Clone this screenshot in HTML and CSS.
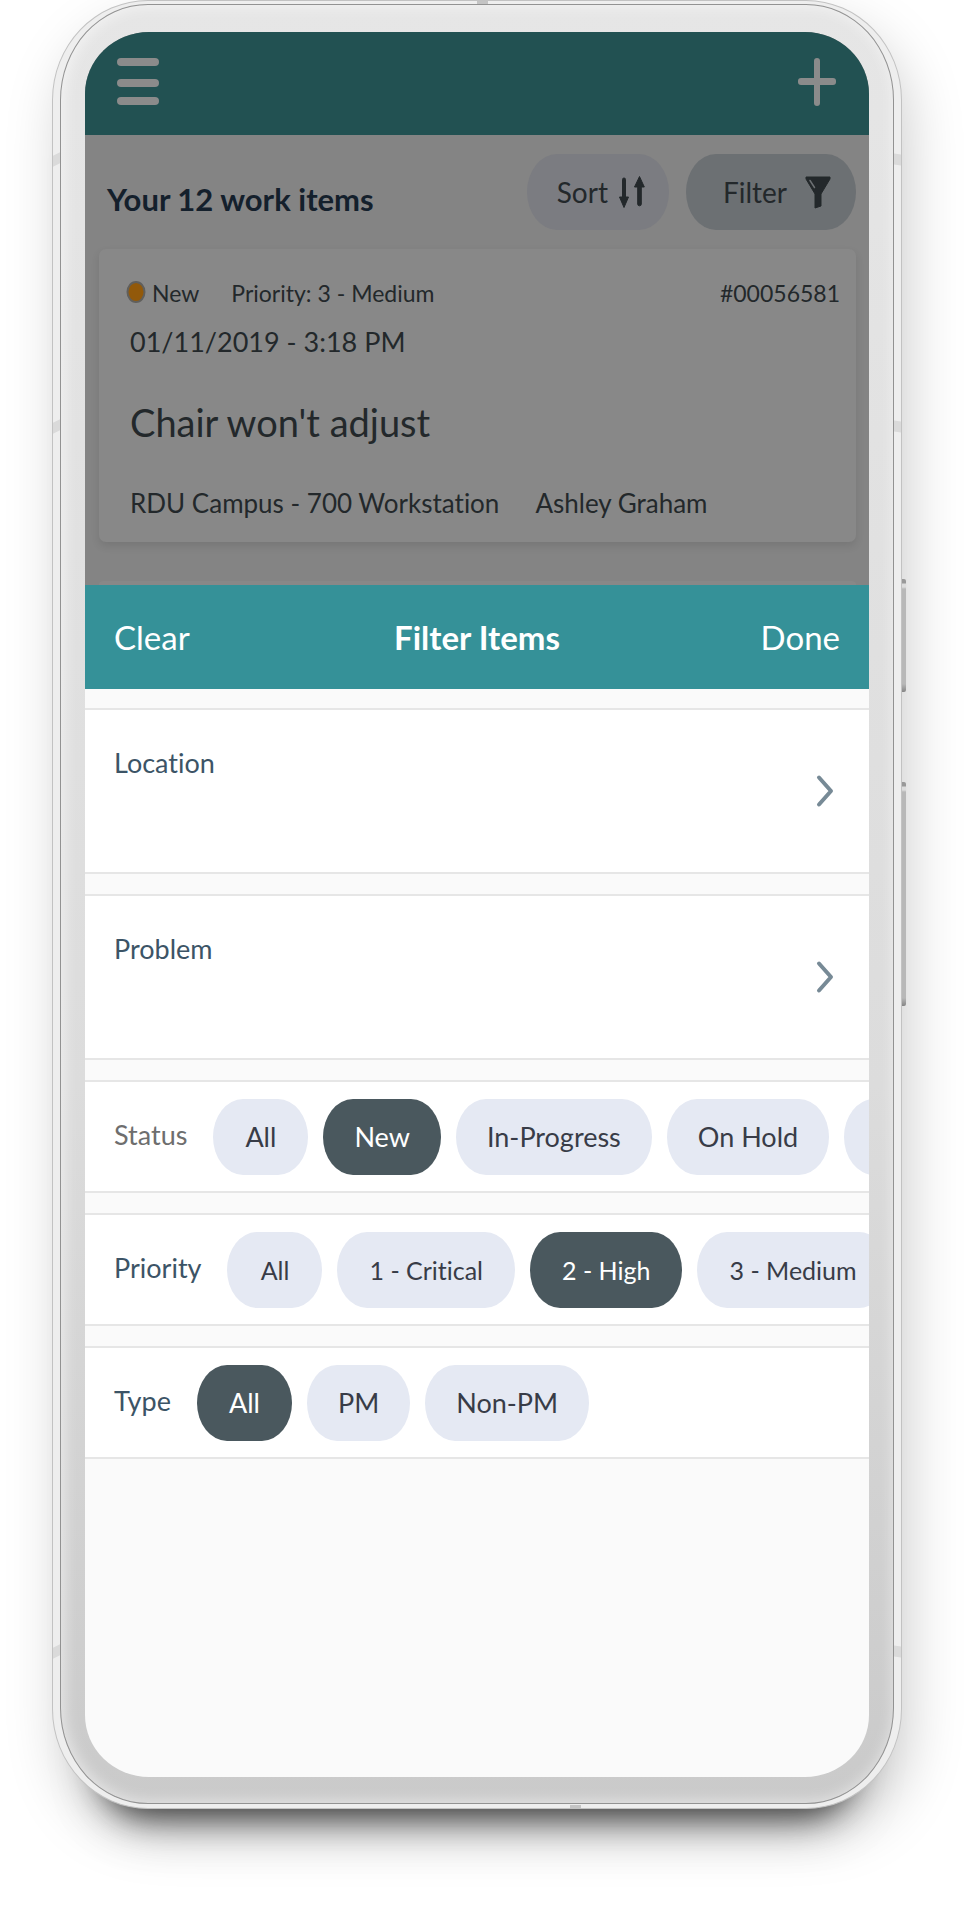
FILE: index.html
```html
<!DOCTYPE html>
<html lang="en">
<head>
<meta charset="utf-8">
<meta name="viewport" content="width=device-width, initial-scale=1">
<title>Filter Items</title>
<link rel="stylesheet" href="styles.css">
</head>
<body>
<div class="phone">
  <span class="seam seam-left seam-high"></span>
  <span class="seam seam-left seam-mid"></span>
  <span class="seam seam-left seam-low"></span>
  <span class="seam seam-right seam-high"></span>
  <span class="seam seam-right seam-mid"></span>
  <span class="seam seam-right seam-low"></span>
  <span class="seam-flat seam-top"></span>
  <span class="seam-flat seam-bottom"></span>
  <span class="key key-power"></span>
  <span class="key key-volume"></span>
  <div class="bezel">
    <div class="screen">
      <div class="app">
        <header class="app-bar">
          <button class="icon-button" type="button" aria-label="Menu">
            <svg width="42" height="48" viewBox="0 0 42 48"><g fill="#8b8b8b"><rect width="42" height="8" y="0" rx="4"/><rect width="42" height="8" y="21" rx="4"/><rect width="42" height="8" y="39" rx="4"/></g></svg>
          </button>
          <button class="icon-button" type="button" aria-label="Add">
            <svg width="40" height="48" viewBox="0 0 40 48"><g fill="#8b8b8b"><rect x="1" y="20" width="38" height="7" rx="3"/><rect x="17" y="0" width="6" height="48" rx="3"/></g></svg>
          </button>
        </header>
        <div class="toolbar">
          <h1 class="heading">Your 12 work items</h1>
          <button class="tool tool-sort" type="button">Sort
            <svg width="26" height="32" viewBox="0 0 26 32"><g fill="#23282b" stroke="#23282b" stroke-width="1" stroke-linejoin="round"><path d="M3.500 3.500a1.500 1.500 0 0 1 3 0V21h3L5 31.500.5 21h3z"/><path d="M18.700 28a1.800 1.800 0 0 0 3.600 0V11h3L20.500.5 15.500 11h3.200z"/></g></svg>
          </button>
          <button class="tool tool-filter" type="button">Filter
            <svg width="26" height="33" viewBox="0 0 26 33"><path d="M1 1h24v2L16 18v12l-6 2V18L1 3z" fill="#23282b" stroke="#23282b" stroke-linejoin="round"/><path d="M5 4.500L9.500 11.500" stroke="#6c7073" stroke-width="1.500" stroke-linecap="round"/></svg>
          </button>
        </div>
        <article class="card">
          <div class="card-meta">
            <svg width="20" height="24" viewBox="0 0 20 24"><ellipse cx="10" cy="11" rx="8.500" ry="10" fill="#92590a" stroke="#605f5c" stroke-width="2"/></svg>
            <span class="state">New</span>
            <span>Priority: 3 - Medium</span>
            <span class="ticket">#00056581</span>
          </div>
          <time class="card-time">01/11/2019 - 3:18 PM</time>
          <h2 class="card-title">Chair won't adjust</h2>
          <div class="card-place"><span>RDU Campus - 700 Workstation</span><span>Ashley Graham</span></div>
        </article>
        <div class="card-next"></div>
      </div>
      <section class="sheet">
        <header class="sheet-bar">
          <button class="sheet-action" type="button">Clear</button>
          <h2 class="sheet-title">Filter Items</h2>
          <button class="sheet-action" type="button">Done</button>
        </header>
        <div class="groups">
          <button class="group link-group" type="button">
            <span>Location</span>
            <svg class="chevron" width="18" height="34" viewBox="0 0 18 34"><path d="M3 3.500L15 17 3 30.500" fill="none" stroke="#778a96" stroke-width="4" stroke-linecap="round" stroke-linejoin="round"/></svg>
          </button>
          <button class="group link-group" type="button">
            <span>Problem</span>
            <svg class="chevron" width="18" height="34" viewBox="0 0 18 34"><path d="M3 3.500L15 17 3 30.500" fill="none" stroke="#778a96" stroke-width="4" stroke-linecap="round" stroke-linejoin="round"/></svg>
          </button>
          <div class="group chip-group" role="group" aria-labelledby="status">
            <span class="label label-muted" id="status">Status</span>
            <button class="chip" type="button">All</button>
            <button class="chip chip-on" type="button" aria-pressed="true">New</button>
            <button class="chip" type="button">In-Progress</button>
            <button class="chip" type="button">On Hold</button>
            <button class="chip chip-more" type="button" aria-label="More statuses"></button>
          </div>
          <div class="group chip-group chip-group-dense" role="group" aria-labelledby="priority">
            <span class="label" id="priority">Priority</span>
            <button class="chip" type="button">All</button>
            <button class="chip" type="button">1 - Critical</button>
            <button class="chip chip-on" type="button" aria-pressed="true">2 - High</button>
            <button class="chip" type="button">3 - Medium</button>
          </div>
          <div class="group chip-group" role="group" aria-labelledby="type">
            <span class="label" id="type">Type</span>
            <button class="chip chip-on" type="button" aria-pressed="true">All</button>
            <button class="chip" type="button">PM</button>
            <button class="chip" type="button">Non-PM</button>
          </div>
        </div>
      </section>
    </div>
  </div>
</div>
</body>
</html>
```

FILE: styles.css
```css
* { box-sizing: border-box; }

body {
  margin: 0;
  min-height: 100vh;
  display: flex;
  padding: 0 77px 111px 52px;
  overflow-x: hidden;
  background: #fff;
  font-family: Lato, "Liberation Sans", sans-serif;
  font-size: 27px;
  line-height: 36px;
  font-variant-ligatures: none;
  color: #23282b;
}

h1, h2 { margin: 0; }

button {
  margin: 0;
  padding: 0;
  border: 0;
  background: none;
  font: inherit;
  font-variant-ligatures: none;
  color: inherit;
  white-space: nowrap;
}

svg { display: block; flex: none; }

/* Device shell */
.phone {
  position: relative;
  flex: 1;
  min-width: 0;
  display: flex;
  padding: 3px 7px 4px;
  border: 1px solid #c2c2c2;
  border-radius: 96px / 100px;
  background: #eeeeee;
  box-shadow:
    0 56px 30px -50px rgba(0, 0, 0, 0.6),
    0 60px 50px -50px rgba(0, 0, 0, 0.35),
    8px 24px 60px -6px rgba(0, 0, 0, 0.22);
}

.bezel {
  flex: 1;
  min-width: 0;
  display: flex;
  padding: 27px 24px 26px;
  border: 1px solid #929292;
  border-radius: 88px / 96px;
  background: linear-gradient(#e6e6e6, #dcdcdc 60%, #cacaca);
  box-shadow: inset 2px 0 14px 2px rgba(255, 255, 255, 0.5);
}

.screen {
  flex: 1;
  min-width: 0;
  display: flex;
  flex-direction: column;
  overflow: hidden;
  border-radius: 64px / 62px;
  background: #fafafa;
}

.key {
  position: absolute;
  right: -5px;
  width: 4px;
  border-radius: 0 2px 2px 0;
  background: linear-gradient(#999 0 4px, #ddd 5px 8px, #b8b8b8 10px calc(100% - 8px), #858585);
}
.key-power { top: 578px; height: 113px; }
.key-volume { top: 781px; height: 224px; }

.seam { position: absolute; width: 7px; height: 11px; background: #dadada; }
.seam-left { left: 0; transform: skewY(-25deg); }
.seam-right { right: 0; transform: skewY(10deg); }
.seam-high { top: 153px; }
.seam-mid { top: 420px; }
.seam-low { top: 1645px; }
.seam-flat { position: absolute; width: 11px; height: 3px; background: #c4c4c4; }
.seam-top { top: 0; left: 50%; }
.seam-bottom { bottom: 0; left: 61%; }

/* Work list, dimmed behind the sheet */
.app { background: #848484; }

.app-bar {
  display: flex;
  justify-content: space-between;
  padding: 26px 32px 29px;
  background: #225152;
}

.toolbar {
  display: flex;
  align-items: center;
  gap: 17px;
  padding: 19px 13px 19px 22px;
}

.heading {
  flex: 1;
  padding-top: 14px;
  font-size: 31px;
  line-height: 40px;
  font-weight: 700;
  color: #14202c;
  white-space: nowrap;
}

.tool {
  display: flex;
  align-items: center;
  height: 76px;
  border-radius: 30px / 38px;
  font-size: 28px;
}
.tool-sort { gap: 11px; padding: 0 24px 0 30px; background: #7b7c81; }
.tool-filter { gap: 18px; padding: 0 25px 0 37px; background: #6c7073; }

.card {
  margin: 0 13px 0 14px;
  padding: 28px 16px 15px 31px;
  border-radius: 7px;
  background: #888;
  box-shadow: 0 4px 8px rgba(0, 0, 0, 0.1);
}

.card-meta { display: flex; align-items: center; font-size: 23px; line-height: 32px; }
.card-meta svg { margin-left: -4px; }
.state { margin: 0 32px 0 6px; }
.ticket { margin-left: auto; }

.card-time { display: block; padding-top: 15px; font-size: 27px; }

.card-title {
  padding: 36px 0 31px;
  font-size: 38px;
  line-height: 52px;
  font-weight: 400;
}

.card-place { display: flex; gap: 36px; font-size: 26px; line-height: 48px; white-space: nowrap; }

.card-next {
  height: 4px;
  margin: 39px 13px 0 14px;
  border-radius: 4px 4px 0 0;
  background: #888;
}

/* Filter sheet */
.sheet { flex: 1; }

.sheet-bar {
  display: grid;
  grid-template-columns: 1fr auto 1fr;
  align-items: center;
  height: 104px;
  padding: 0 29px;
  background: #359198;
  color: #fff;
  font-size: 33px;
  line-height: 40px;
}
.sheet-action:first-child { justify-self: start; }
.sheet-action:last-child { justify-self: end; }
.sheet-title { font-size: 33px; font-weight: 700; }

.groups { display: flex; flex-direction: column; gap: 20px; padding-top: 19px; }

.group {
  display: flex;
  width: 100%;
  border: solid #e6e6e6;
  border-width: 2px 0;
  background: #fff;
  color: #3c5466;
}

.link-group {
  justify-content: space-between;
  align-items: flex-start;
  height: 166px;
  padding: 35px 35px 0 29px;
}
.chevron { margin-top: 29px; }

.chip-group {
  align-items: center;
  gap: 15px;
  height: 113px;
  padding-left: 29px;
  overflow: hidden;
}
.label { margin-right: 11px; padding-bottom: 3px; }
.label-muted { color: #6e6e6e; }

.chip {
  flex: none;
  min-width: 95px;
  height: 76px;
  padding: 0 31px;
  border-radius: 30px / 38px;
  background: #e5e9f3;
  color: #383c47;
}
.chip-group-dense .chip { padding: 0 32px; font-size: 25px; }
.chip-on,
.chip-group-dense .chip-on { background: #4a585e; color: #fff; }
.chip-more { width: 120px; }
```
